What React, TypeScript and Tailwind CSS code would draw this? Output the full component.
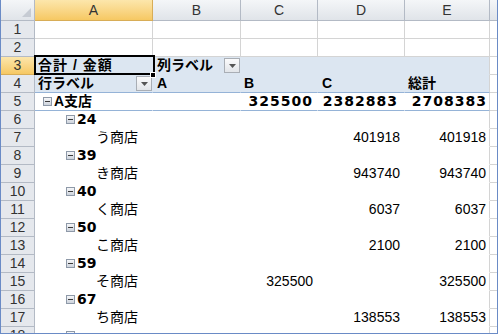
import type { ReactNode } from "react"

const COLS = ["w-[118px]", "w-[88px]", "w-[77px]", "w-[87px]", "w-[85px]"]
const LETTERS = ["A", "B", "C", "D", "E"]

const HEAD = "border-[#b3bac5] bg-gradient-to-b from-[#f4f6f8] to-[#e0e4e9]"
const HEAD_ON = "border-[#d8ad57] bg-gradient-to-b from-[#fce6ab] to-[#f6c862]"

// store rows: [group, store, col C value, col D value]
const groups: [string, string, string, string][] = [
  ["24", "う商店", "", "401918"],
  ["39", "き商店", "", "943740"],
  ["40", "く商店", "", "6037"],
  ["50", "こ商店", "", "2100"],
  ["59", "そ商店", "325500", ""],
  ["67", "ち商店", "", "138553"],
]

function Minus() {
  return (
    <span className="inline-flex w-[9px] h-[9px] shrink-0 items-center justify-center border border-[#8e99a8] bg-gradient-to-b from-[#f6f7f9] to-[#cdd3dc] mr-[2px]">
      <span className="w-[5px] h-px bg-[#3a3a3a]" />
    </span>
  )
}

function Drop() {
  return (
    <span className="flex w-[16px] h-[15px] shrink-0 items-center justify-center border border-[#a9aeb5] bg-gradient-to-b from-[#fbfbfc] to-[#e2e5e9]">
      <svg width="7" height="4" viewBox="0 0 7 4">
        <path d="M0 0h7L3.5 4z" fill="#555" />
      </svg>
    </span>
  )
}

function Row({ n, active, children }: { n: number; active?: boolean; children: ReactNode }) {
  return (
    <div className="flex h-[18px] shrink-0">
      <div className={`w-[34px] shrink-0 flex items-center justify-center border-r border-b text-[14px] text-[#333] ${active ? HEAD_ON : "border-[#b3bac5] bg-[#e5e8ed]"}`}>
        {n}
      </div>
      {children}
      <div className="flex-1 border-b border-[#d4d4d4]" />
    </div>
  )
}

function Cell({ i, className = "", children }: { i: number; className?: string; children?: ReactNode }) {
  return <div className={`${COLS[i]} shrink-0 flex items-center border-r border-b whitespace-nowrap ${className}`}>{children}</div>
}

function Plain() {
  return (
    <>
      {COLS.map((_, i) => (
        <Cell key={i} i={i} className="border-[#d4d4d4]" />
      ))}
    </>
  )
}

const BOLDNUM = "font-['DejaVu_Sans',sans-serif] font-bold text-[14px] tracking-[1px]"
const NUM = "font-['Liberation_Sans',sans-serif] text-[14px]"

function StoreRows() {
  let n = 6
  return (
    <>
      {groups.map(([g, store, c, d]) => {
        const total = c || d
        return [
          <Row key={g} n={n++}>
            <Cell i={0} className="border-white pl-[31px]">
              <Minus />
              <span className="font-['DejaVu_Sans',sans-serif] font-bold text-[14px]">{g}</span>
            </Cell>
            <Cell i={1} className="border-white" />
            <Cell i={2} className="border-white" />
            <Cell i={3} className="border-white" />
            <Cell i={4} className="border-b-white border-r-[#d4d4d4]" />
          </Row>,
          <Row key={store} n={n++}>
            <Cell i={0} className="border-white pl-[61px] text-[14px]">{store}</Cell>
            <Cell i={1} className="border-white" />
            <Cell i={2} className={`border-white justify-end pr-[4px] ${NUM}`}>{c}</Cell>
            <Cell i={3} className={`border-white justify-end pr-[4px] ${NUM}`}>{d}</Cell>
            <Cell i={4} className={`border-b-white border-r-[#d4d4d4] justify-end pr-[3px] ${NUM}`}>{total}</Cell>
          </Row>,
        ]
      })}
    </>
  )
}

export default function App() {
  return (
    <div className="w-[498px] h-[334px] overflow-hidden flex flex-col bg-white border-l border-r border-b border-[#6a8bc6] text-black font-['Liberation_Sans','Noto_Sans_CJK_JP',sans-serif] leading-[17px]">
      <div className="flex h-[21px] shrink-0">
        <div className={`relative w-[34px] shrink-0 border-r border-b ${HEAD}`}>
          <svg className="absolute right-[3px] bottom-[3px]" width="9" height="9" viewBox="0 0 9 9">
            <path d="M9 0V9H0z" fill="#c6cbd3" />
          </svg>
        </div>
        {LETTERS.map((l, i) => (
          <div key={l} className={`${COLS[i]} shrink-0 flex items-center justify-center border-r border-b text-[14px] text-[#333] ${i === 0 ? HEAD_ON : HEAD}`}>
            {l}
          </div>
        ))}
        <div className={`flex-1 border-b ${HEAD}`} />
      </div>

      <Row n={1}>
        <Plain />
      </Row>
      <Row n={2}>
        <Plain />
      </Row>

      <Row n={3} active>
        <Cell i={0} className="relative bg-[#dce6f1] border-[#dce6f1] pl-[3px] font-bold text-[14px] tracking-[1px]">
          合計 / 金額
          <span className="absolute -left-[1px] -top-[2px] w-[121px] h-[20px] border-2 border-black" />
          <span className="absolute left-[115px] top-[15px] w-[6px] h-[6px] bg-black border border-white" />
        </Cell>
        <Cell i={1} className="bg-[#dce6f1] border-[#dce6f1] pl-[4px] justify-between font-bold text-[14px]">
          列ラベル
          <Drop />
        </Cell>
        <Cell i={2} className="bg-[#dce6f1] border-[#dce6f1]" />
        <Cell i={3} className="bg-[#dce6f1] border-[#dce6f1]" />
        <Cell i={4} className="bg-[#dce6f1] border-b-[#dce6f1] border-r-[#d4d4d4]" />
      </Row>

      <Row n={4}>
        <Cell i={0} className="bg-[#dce6f1] border-r-[#dce6f1] border-b-[#95b3d7] pl-[3px] justify-between font-bold text-[14px]">
          行ラベル
          <Drop />
        </Cell>
        <Cell i={1} className="bg-[#dce6f1] border-r-[#dce6f1] border-b-[#95b3d7] pl-[4px] font-bold text-[14px]">A</Cell>
        <Cell i={2} className="bg-[#dce6f1] border-r-[#dce6f1] border-b-[#95b3d7] pl-[3px] font-bold text-[14px]">B</Cell>
        <Cell i={3} className="bg-[#dce6f1] border-r-[#dce6f1] border-b-[#95b3d7] pl-[4px] font-bold text-[14px]">C</Cell>
        <Cell i={4} className="bg-[#dce6f1] border-r-[#d4d4d4] border-b-[#95b3d7] pl-[3px] font-bold text-[14px]">総計</Cell>
      </Row>

      <Row n={5}>
        <Cell i={0} className="border-r-white border-b-[#95b3d7] pl-[8px] font-bold text-[14px]">
          <Minus />
          A支店
        </Cell>
        <Cell i={1} className="border-r-white border-b-[#95b3d7]" />
        <Cell i={2} className={`border-r-white border-b-[#95b3d7] justify-end pr-[4px] ${BOLDNUM}`}>325500</Cell>
        <Cell i={3} className={`border-r-white border-b-[#95b3d7] justify-end pr-[6px] ${BOLDNUM}`}>2382883</Cell>
        <Cell i={4} className={`border-r-[#d4d4d4] border-b-[#95b3d7] justify-end pr-[2px] ${BOLDNUM}`}>2708383</Cell>
      </Row>

      <StoreRows />

      <Row n={18}>
        <Cell i={0} className="border-white pl-[31px]">
          <Minus />
        </Cell>
        <Cell i={1} className="border-white" />
        <Cell i={2} className="border-white" />
        <Cell i={3} className="border-white" />
        <Cell i={4} className="border-b-white border-r-[#d4d4d4]" />
      </Row>
    </div>
  )
}
